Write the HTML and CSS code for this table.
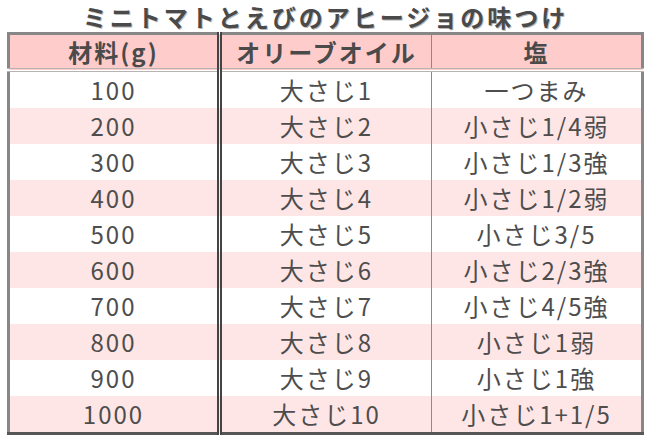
FILE: index.html
```html
<!DOCTYPE html>
<html lang="ja">
<head>
<meta charset="utf-8">
<title>ミニトマトとえびのアヒージョの味つけ</title>
<link rel="stylesheet" href="styles.css">
</head>
<body>
<div class="page">
  <h1 class="title">ミニトマトとえびのアヒージョの味つけ</h1>
  <table class="recipe">
    <thead>
      <tr><th class="c1">材料(g)</th><th class="c2">オリーブオイル</th><th class="c3">塩</th></tr>
    </thead>
    <tbody>
      <tr><td class="c1">100</td><td class="c2">大さじ1</td><td class="c3">一つまみ</td></tr>
      <tr><td class="c1">200</td><td class="c2">大さじ2</td><td class="c3">小さじ1/4弱</td></tr>
      <tr><td class="c1">300</td><td class="c2">大さじ3</td><td class="c3">小さじ1/3強</td></tr>
      <tr><td class="c1">400</td><td class="c2">大さじ4</td><td class="c3">小さじ1/2弱</td></tr>
      <tr><td class="c1">500</td><td class="c2">大さじ5</td><td class="c3">小さじ3/5</td></tr>
      <tr><td class="c1">600</td><td class="c2">大さじ6</td><td class="c3">小さじ2/3強</td></tr>
      <tr><td class="c1">700</td><td class="c2">大さじ7</td><td class="c3">小さじ4/5強</td></tr>
      <tr><td class="c1">800</td><td class="c2">大さじ8</td><td class="c3">小さじ1弱</td></tr>
      <tr><td class="c1">900</td><td class="c2">大さじ9</td><td class="c3">小さじ1強</td></tr>
      <tr><td class="c1">1000</td><td class="c2">大さじ10</td><td class="c3">小さじ1+1/5</td></tr>
    </tbody>
  </table>
</div>
</body>
</html>
```

FILE: styles.css
```css
html, body {
  margin: 0;
  padding: 0;
  background: #ffffff;
}

body {
  font-family: "Noto Sans CJK JP", "Noto Sans", sans-serif;
  color: #4d4d4d;
}

.page {
  width: 650px;
  padding: 0 6px 0 7px;
  box-sizing: border-box;
}

.title {
  margin: 0;
  height: 32px;
  box-sizing: border-box;
  padding-top: 1px;
  font-size: 24px;
  line-height: 32px;
  font-weight: bold;
  letter-spacing: 3px;
  text-align: center;
  color: #4a4a4a;
  text-shadow: 1px 1px 0 #b8b8b8;
}

.recipe {
  width: 100%;
  border-collapse: collapse;
  border: 3px solid #878787;
  border-bottom-color: #575757;
  table-layout: fixed;
}

.recipe th,
.recipe td {
  padding: 0;
  text-align: center;
  vertical-align: middle;
}

.recipe th {
  height: 33px;
  background: #ffcccc;
  font-size: 24px;
  line-height: 33px;
  font-weight: bold;
  letter-spacing: 2px;
  color: #4a4a4a;
  border-bottom: 4px double #b4b4b4;
}

.recipe td {
  height: 36px;
  font-size: 24px;
  line-height: 36px;
  letter-spacing: 2px;
  color: #4d4d4d;
}

.recipe tbody tr:nth-child(even) td {
  background: #ffe6e6;
}

.recipe .c1 {
  width: 207px;
  border-right: 5px double #444444;
}

.recipe .c2 {
  width: 209px;
  border-right: 1px solid #8a8a8a;
}
```
